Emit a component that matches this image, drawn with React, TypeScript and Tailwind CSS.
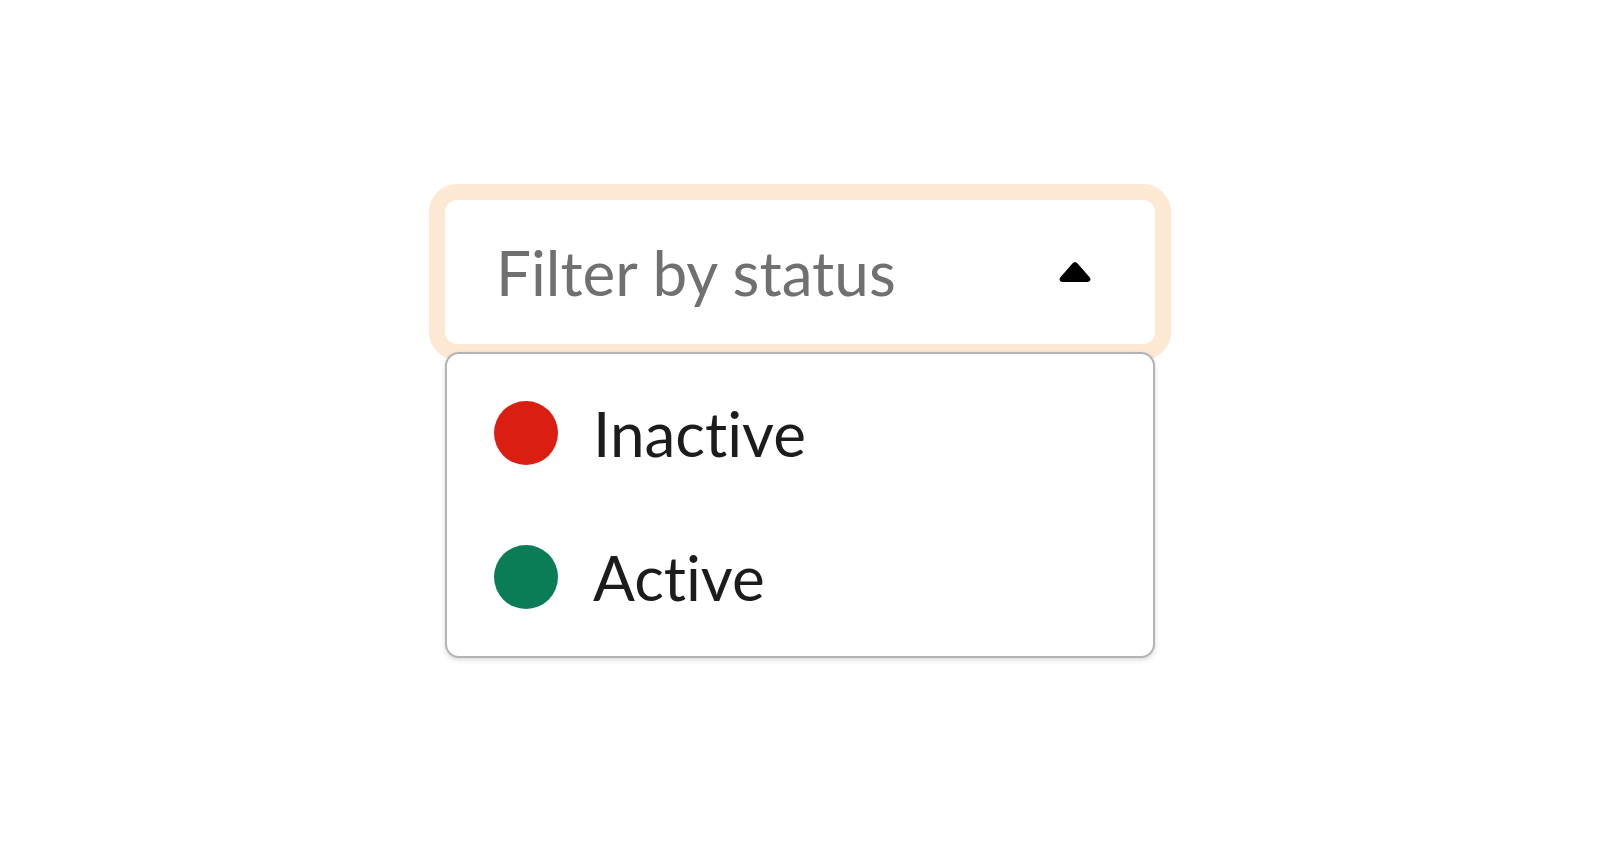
import { useState } from "react";

type Status = { label: string; color: string };

const statuses: Status[] = [
  { label: "Inactive", color: "bg-[#da1f12]" },
  { label: "Active", color: "bg-[#0a7d57]" },
];

const CaretUp = () => (
  <svg width="34" height="22" viewBox="0 0 34 22" className="shrink-0">
    <path
      d="M14.4 2.6 Q17 -0.4 19.6 2.6 L31.6 16.2 Q34 19.5 30 21 L4 21 Q0 19.5 2.4 16.2 Z"
      fill="#000"
    />
  </svg>
);

export default function App() {
  const [open, setOpen] = useState(true);

  return (
    <div className="min-h-[856px] bg-white pt-[200px] font-['Lato',sans-serif] [font-variant-ligatures:none]">
      <div className="w-[710px] mx-auto">
        {/* Trigger with focus ring */}
        <button
          onClick={() => setOpen(!open)}
          className="w-full h-[144px] flex items-center justify-between pl-[51px] pr-[63px] bg-white rounded-[12px] shadow-[0_0_0_16px_#fde8d3]"
        >
          <span className="text-[62px] text-[#707070] leading-none">Filter by status</span>
          <CaretUp />
        </button>

        {open && (
          <div className="mt-2 bg-white border-2 border-[#b4b4b4] rounded-[14px] shadow-[0_2px_5px_rgba(0,0,0,0.15)] py-[7px]">
            {statuses.map((s) => (
              <div key={s.label} className="h-[144px] flex items-center pl-[47px] gap-[35px]">
                <span className={`w-16 h-16 rounded-full ${s.color}`} />
                <span className="text-[62px] text-[#1c1c1c] leading-none">{s.label}</span>
              </div>
            ))}
          </div>
        )}
      </div>
    </div>
  );
}
